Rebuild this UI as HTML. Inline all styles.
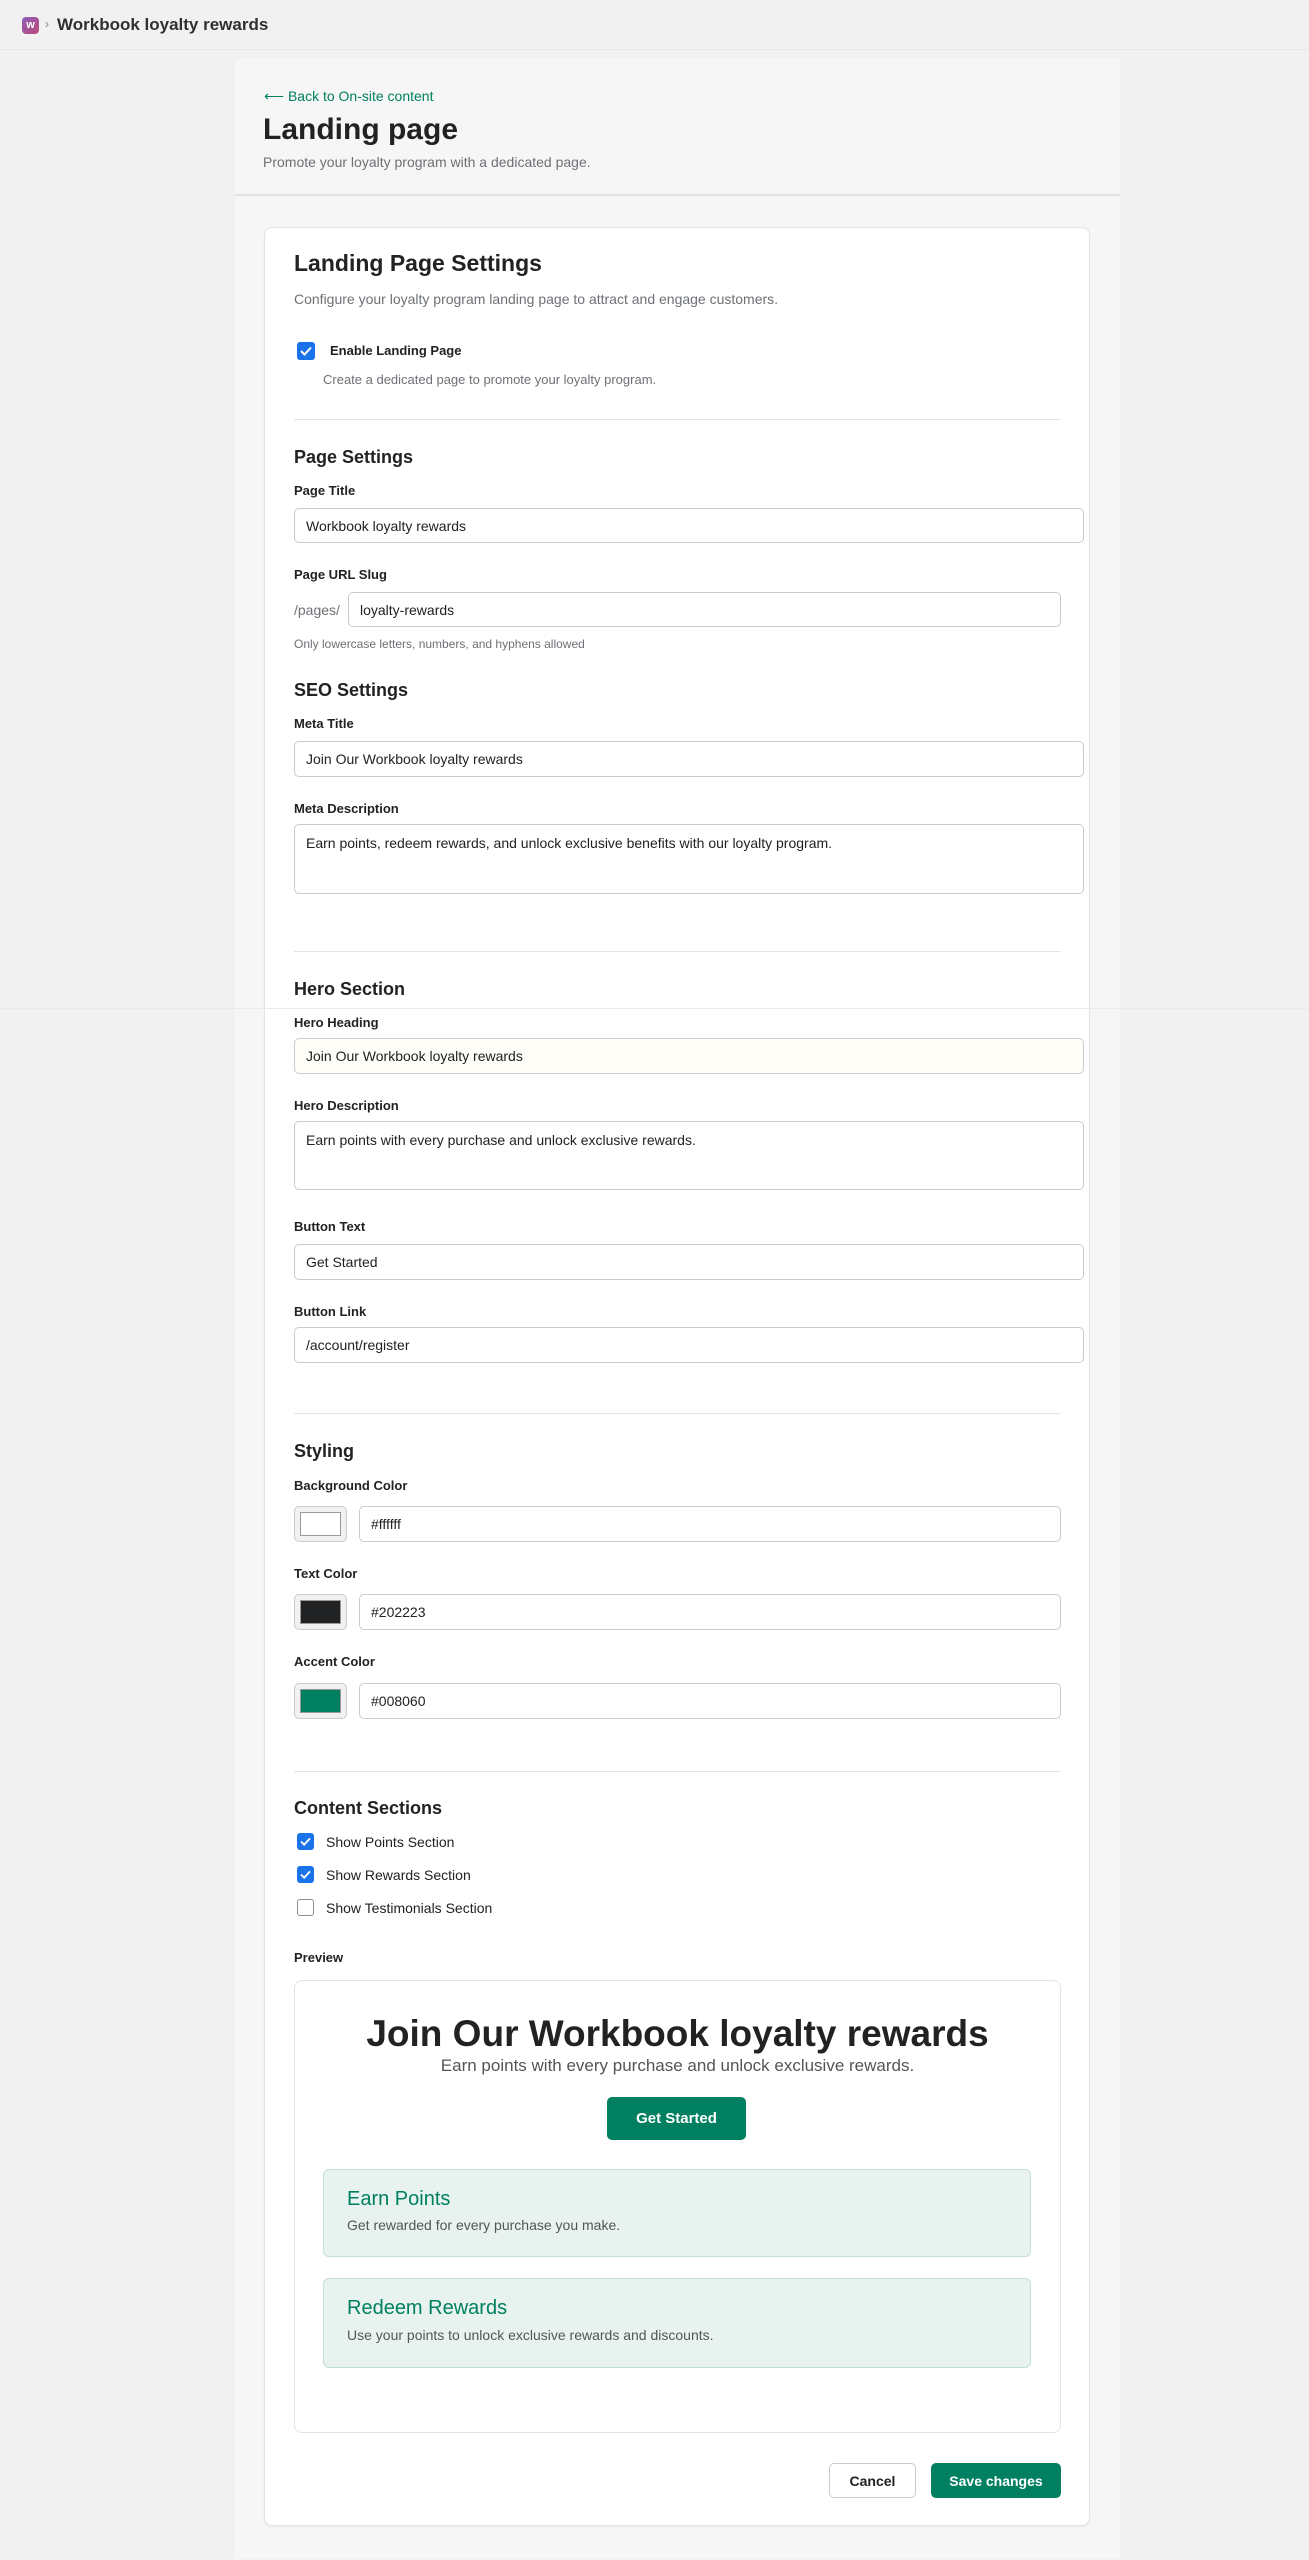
<!DOCTYPE html>
<html><head><meta charset="utf-8"><style>
*{box-sizing:border-box;margin:0;padding:0}
body{width:1309px;height:2560px;background:#f1f1f1;font-family:"Liberation Sans",Arial,sans-serif;color:#202223;position:relative;overflow:hidden}
.a{position:absolute}
.top{left:0;top:0;width:1309px;height:50px;background:#f1f1f1;border-bottom:1px solid #e6e6e6}
.page{left:235px;top:59px;width:885px;height:2500px;background:#f6f6f6}
.hdr{left:235px;top:59px;width:885px;height:137px;background:#f6f6f6;border-bottom:2px solid #e1e3e5}
.card{left:264px;top:227px;width:826px;height:2299px;background:#fff;border:1px solid #e1e3e5;border-radius:8px;box-shadow:0 1px 2px rgba(0,0,0,.06)}
.lbl{font-size:13px;font-weight:bold;color:#202223}
.h3{font-size:18px;font-weight:bold;color:#202223}
.inp{border:1px solid #c9cccf;border-radius:5px;background:#fff;font-size:14px;padding:0 11px;display:flex;align-items:center;color:#202223}
.ta{align-items:flex-start;padding-top:10px}
.div{height:1px;background:#e4e5e7;left:294px;width:767px}
.cb{width:17px;height:17px;border-radius:3px;background:#1a73e8;display:flex;align-items:center;justify-content:center}
.cb.off{background:#fff;border:1.5px solid #8c9196}
.sw{width:53px;height:36px;border:1px solid #c9cccf;border-radius:5px;background:#f1f1f1;padding:5px}
.sw div{width:100%;height:100%;border:1px solid #999}
</style></head><body>
<div class="a top"></div>
<div class="a" style="left:22px;top:17px;width:17px;height:17px;border-radius:4px;background:linear-gradient(135deg,#8a5fb8,#c0497a);color:#fff;font-size:11px;font-weight:bold;text-align:center;line-height:17px">w</div>
<div class="a" style="left:45px;top:17px;font-size:12px;color:#888">›</div>
<div class="a" style="left:57px;top:15px;font-size:17px;font-weight:bold;color:#303030">Workbook loyalty rewards</div>
<div class="a page"></div>
<div class="a hdr"></div>
<div class="a" style="left:264px;top:88px;font-size:14px;color:#008060">⟵ Back to On-site content</div>
<div class="a" style="left:263px;top:113px;font-size:30px;font-weight:bold;color:#202223">Landing page</div>
<div class="a" style="left:263px;top:154px;font-size:14px;color:#6d7175">Promote your loyalty program with a dedicated page.</div>
<div class="a card"></div>

<div class="a" style="left:294px;top:250px;font-size:23px;font-weight:bold">Landing Page Settings</div>
<div class="a" style="left:294px;top:291px;font-size:14px;color:#6d7175">Configure your loyalty program landing page to attract and engage customers.</div>
<div class="a cb" style="left:297px;top:342px;width:18px;height:18px"><svg width="12" height="10" viewBox="0 0 12 10"><path d="M1 5l3.5 3.5L11 1.5" stroke="#fff" stroke-width="2" fill="none"/></svg></div>
<div class="a lbl" style="left:330px;top:343px">Enable Landing Page</div>
<div class="a" style="left:323px;top:372px;font-size:13px;color:#6d7175">Create a dedicated page to promote your loyalty program.</div>
<div class="a div" style="top:419px"></div>

<div class="a h3" style="left:294px;top:447px">Page Settings</div>
<div class="a lbl" style="left:294px;top:483px">Page Title</div>
<div class="a inp" style="left:294px;top:508px;width:790px;height:35px">Workbook loyalty rewards</div>
<div class="a lbl" style="left:294px;top:567px">Page URL Slug</div>
<div class="a" style="left:294px;top:602px;font-size:14px;color:#6d7175">/pages/</div>
<div class="a inp" style="left:348px;top:592px;width:713px;height:35px">loyalty-rewards</div>
<div class="a" style="left:294px;top:637px;font-size:12px;color:#6d7175">Only lowercase letters, numbers, and hyphens allowed</div>

<div class="a h3" style="left:294px;top:680px">SEO Settings</div>
<div class="a lbl" style="left:294px;top:716px">Meta Title</div>
<div class="a inp" style="left:294px;top:741px;width:790px;height:36px">Join Our Workbook loyalty rewards</div>
<div class="a lbl" style="left:294px;top:801px">Meta Description</div>
<div class="a inp ta" style="left:294px;top:824px;width:790px;height:70px">Earn points, redeem rewards, and unlock exclusive benefits with our loyalty program.</div>
<div class="a div" style="top:951px"></div>

<div class="a h3" style="left:294px;top:979px">Hero Section</div>
<div class="a" style="left:0;top:1008px;width:1309px;height:1px;background:#eaeaea"></div>
<div class="a lbl" style="left:294px;top:1015px">Hero Heading</div>
<div class="a inp" style="left:294px;top:1038px;width:790px;height:36px;background:#fffdf7">Join Our Workbook loyalty rewards</div>
<div class="a lbl" style="left:294px;top:1098px">Hero Description</div>
<div class="a inp ta" style="left:294px;top:1121px;width:790px;height:69px">Earn points with every purchase and unlock exclusive rewards.</div>
<div class="a lbl" style="left:294px;top:1219px">Button Text</div>
<div class="a inp" style="left:294px;top:1244px;width:790px;height:36px">Get Started</div>
<div class="a lbl" style="left:294px;top:1304px">Button Link</div>
<div class="a inp" style="left:294px;top:1327px;width:790px;height:36px">/account/register</div>
<div class="a div" style="top:1413px"></div>

<div class="a h3" style="left:294px;top:1441px">Styling</div>
<div class="a lbl" style="left:294px;top:1478px">Background Color</div>
<div class="a sw" style="left:294px;top:1506px"><div style="background:#fff"></div></div>
<div class="a inp" style="left:359px;top:1506px;width:702px;height:36px">#ffffff</div>
<div class="a lbl" style="left:294px;top:1566px">Text Color</div>
<div class="a sw" style="left:294px;top:1594px"><div style="background:#202223"></div></div>
<div class="a inp" style="left:359px;top:1594px;width:702px;height:36px">#202223</div>
<div class="a lbl" style="left:294px;top:1654px">Accent Color</div>
<div class="a sw" style="left:294px;top:1683px"><div style="background:#008060"></div></div>
<div class="a inp" style="left:359px;top:1683px;width:702px;height:36px">#008060</div>
<div class="a div" style="top:1771px"></div>

<div class="a h3" style="left:294px;top:1798px">Content Sections</div>
<div class="a cb" style="left:297px;top:1833px"><svg width="11" height="9" viewBox="0 0 12 10"><path d="M1 5l3.5 3.5L11 1.5" stroke="#fff" stroke-width="2" fill="none"/></svg></div>
<div class="a" style="left:326px;top:1834px;font-size:14px">Show Points Section</div>
<div class="a cb" style="left:297px;top:1866px"><svg width="11" height="9" viewBox="0 0 12 10"><path d="M1 5l3.5 3.5L11 1.5" stroke="#fff" stroke-width="2" fill="none"/></svg></div>
<div class="a" style="left:326px;top:1867px;font-size:14px">Show Rewards Section</div>
<div class="a cb off" style="left:297px;top:1899px"></div>
<div class="a" style="left:326px;top:1900px;font-size:14px">Show Testimonials Section</div>

<div class="a lbl" style="left:294px;top:1950px">Preview</div>
<div class="a" style="left:294px;top:1980px;width:767px;height:453px;border:1px solid #e1e3e5;border-radius:8px;background:#fff"></div>
<div class="a" style="left:294px;top:2013px;width:767px;text-align:center;font-size:37px;font-weight:bold;color:#202223">Join Our Workbook loyalty rewards</div>
<div class="a" style="left:294px;top:2056px;width:767px;text-align:center;font-size:17px;color:#555">Earn points with every purchase and unlock exclusive rewards.</div>
<div class="a" style="left:607px;top:2097px;width:139px;height:43px;background:#008060;border-radius:5px;color:#fff;font-size:15px;font-weight:bold;display:flex;align-items:center;justify-content:center">Get Started</div>
<div class="a" style="left:323px;top:2169px;width:708px;height:88px;background:#e8f3ef;border:1px solid #c2dfd3;border-radius:6px"></div>
<div class="a" style="left:347px;top:2188px;font-size:20px;color:#008060">Earn Points</div>
<div class="a" style="left:347px;top:2217px;font-size:14px;color:#555">Get rewarded for every purchase you make.</div>
<div class="a" style="left:323px;top:2278px;width:708px;height:90px;background:#e8f3ef;border:1px solid #c2dfd3;border-radius:6px"></div>
<div class="a" style="left:347px;top:2297px;font-size:20px;color:#008060">Redeem Rewards</div>
<div class="a" style="left:347px;top:2327px;font-size:14px;color:#555">Use your points to unlock exclusive rewards and discounts.</div>

<div class="a" style="left:829px;top:2463px;width:87px;height:35px;border:1px solid #c9cccf;border-radius:5px;background:#fff;font-size:14px;font-weight:bold;display:flex;align-items:center;justify-content:center">Cancel</div>
<div class="a" style="left:931px;top:2463px;width:130px;height:35px;border-radius:5px;background:#008060;color:#fff;font-size:14px;font-weight:bold;display:flex;align-items:center;justify-content:center">Save changes</div>
</body></html>
